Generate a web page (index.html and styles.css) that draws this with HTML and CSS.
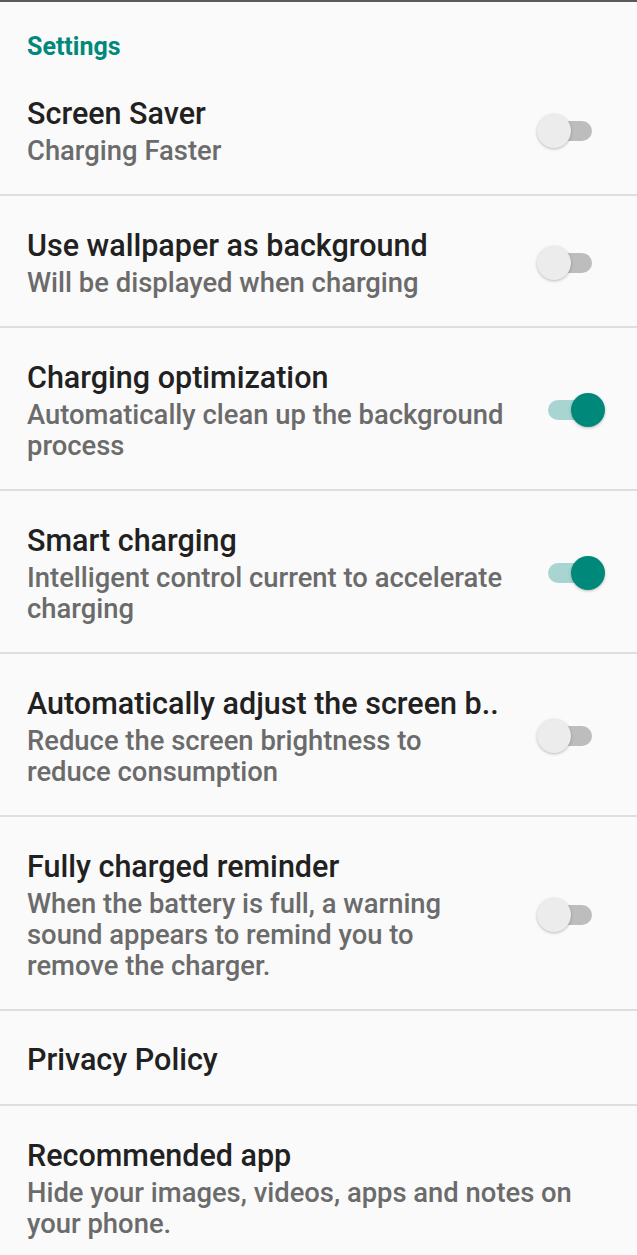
FILE: index.html
```html
<!DOCTYPE html>
<html lang="en">
<head>
    <meta charset="UTF-8">
    <meta name="viewport" content="width=device-width, initial-scale=1.0">
    <title>Settings</title>
    <link rel="stylesheet" href="styles.css">
</head>
<body>
    <div class="topline"></div>
    <h2 class="section">Settings</h2>

    <div class="row">
        <div class="text">
            <div class="title">Screen Saver</div>
            <div class="summary">Charging Faster</div>
        </div>
        <div class="switch"><span class="track"></span><span class="thumb"></span></div>
    </div>

    <div class="row">
        <div class="text">
            <div class="title">Use wallpaper as background</div>
            <div class="summary">Will be displayed when charging</div>
        </div>
        <div class="switch"><span class="track"></span><span class="thumb"></span></div>
    </div>

    <div class="row">
        <div class="text">
            <div class="title">Charging optimization</div>
            <div class="summary">Automatically clean up the background process</div>
        </div>
        <div class="switch on"><span class="track"></span><span class="thumb"></span></div>
    </div>

    <div class="row">
        <div class="text">
            <div class="title">Smart charging</div>
            <div class="summary">Intelligent control current to accelerate charging</div>
        </div>
        <div class="switch on"><span class="track"></span><span class="thumb"></span></div>
    </div>

    <div class="row">
        <div class="text">
            <div class="title">Automatically adjust the screen b..</div>
            <div class="summary">Reduce the screen brightness to reduce consumption</div>
        </div>
        <div class="switch"><span class="track"></span><span class="thumb"></span></div>
    </div>

    <div class="row">
        <div class="text">
            <div class="title">Fully charged reminder</div>
            <div class="summary">When the battery is full, a warning sound appears to remind you to remove the charger.</div>
        </div>
        <div class="switch"><span class="track"></span><span class="thumb"></span></div>
    </div>

    <div class="row single">
        <div class="text">
            <div class="title">Privacy Policy</div>
        </div>
    </div>

    <div class="row wide">
        <div class="text">
            <div class="title">Recommended app</div>
            <div class="summary">Hide your images, videos, apps and notes on your phone.</div>
        </div>
    </div>
</body>
</html>
```

FILE: styles.css
```css
body {
    margin: 0;
    background-color: #fafafa;
    font-family: Roboto, "Noto Sans", sans-serif;
    overflow: hidden;
}
.topline {
    height: 2px;
    background-color: #5a5a5a;
}
.section {
    margin: 0;
    padding: 30px 27px 0;
    height: 32px;
    font-size: 25px;
    font-weight: 700;
    line-height: 30px;
    color: #00897b;
}
.row {
    display: flex;
    align-items: center;
    padding: 30px 32px 27px 27px;
    border-bottom: 2px solid #dedede;
}
.row:last-child {
    border-bottom: none;
}
.text {
    flex: 1;
    max-width: 478px;
}
.row.wide .text {
    max-width: 590px;
}
.title {
    font-size: 30.5px;
    font-weight: 500;
    line-height: 40px;
    color: #212121;
    white-space: nowrap;
}
.summary {
    margin-top: 2px;
    font-size: 27.4px;
    font-weight: 500;
    line-height: 31px;
    color: #6b6b6b;
}
.row.single {
    padding-top: 29px;
    padding-bottom: 24px;
}
.switch {
    position: relative;
    width: 68px;
    height: 36px;
    margin-left: auto;
}
.track {
    position: absolute;
    left: 11px;
    right: 13px;
    top: 8px;
    height: 20px;
    border-radius: 10px;
    background-color: #bdbdbd;
}
.thumb {
    position: absolute;
    left: 0;
    top: 1px;
    width: 34px;
    height: 34px;
    border-radius: 50%;
    background-color: #ececec;
    box-shadow: 0 1px 3px rgba(0, 0, 0, 0.25);
}
.switch.on .track {
    background-color: #a8d5d1;
}
.switch.on .thumb {
    left: auto;
    right: 0;
    background-color: #00897b;
}
```
